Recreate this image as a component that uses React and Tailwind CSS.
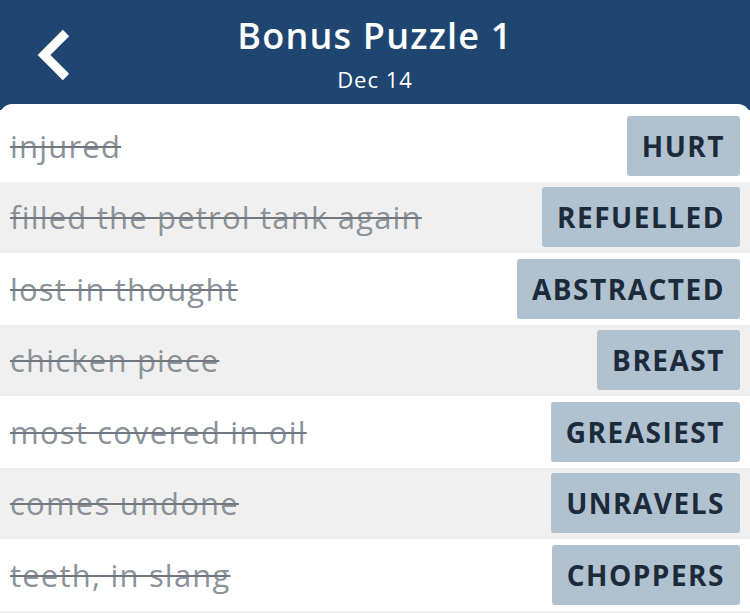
import React from "react";

const rows = [
  ["injured", "HURT"],
  ["filled the petrol tank again", "REFUELLED"],
  ["lost in thought", "ABSTRACTED"],
  ["chicken piece", "BREAST"],
  ["most covered in oil", "GREASIEST"],
  ["comes undone", "UNRAVELS"],
  ["teeth, in slang", "CHOPPERS"],
];

export default function App() {
  return (
    <div className="w-[750px] h-[613px] overflow-hidden bg-[#1f4571] font-['Open_Sans',sans-serif]">
      <div className="relative h-[104px] flex flex-col items-center">
        <svg className="absolute left-[30px] top-[26px]" width="48" height="56" viewBox="0 0 48 56">
          <polyline points="36,7 14,29 36,51" fill="none" stroke="#ffffff" strokeWidth="9" strokeLinecap="butt" strokeLinejoin="miter" />
        </svg>
        <div className="mt-[12px] text-white text-[36px] leading-[48px] font-semibold tracking-[1.2px]">Bonus Puzzle 1</div>
        <div className="mt-[4px] text-white text-[22px] leading-[30px] tracking-[1px]">Dec 14</div>
      </div>
      <div className="bg-white rounded-t-[12px] pt-[6px]">
        {rows.map(([clue, ans], i) => (
          <div
            key={i}
            className={`h-[71.5px] flex items-center justify-between pl-[10px] pr-[10px] ${i % 2 === 1 ? "bg-[#f0f0f0]" : "bg-white"}`}
          >
            <span className="text-[31px] tracking-[1.2px] text-[#8b9299] line-through decoration-[#6f7780] decoration-2">{clue}</span>
            <span className="h-[60px] flex items-center px-[15px] rounded-[3px] bg-[#b0c1d0] text-[#1c2a3a] text-[28px] font-bold tracking-[1.5px]">{ans}</span>
          </div>
        ))}
        <div className="h-[71.5px] bg-[#f0f0f0]"></div>
      </div>
    </div>
  );
}
